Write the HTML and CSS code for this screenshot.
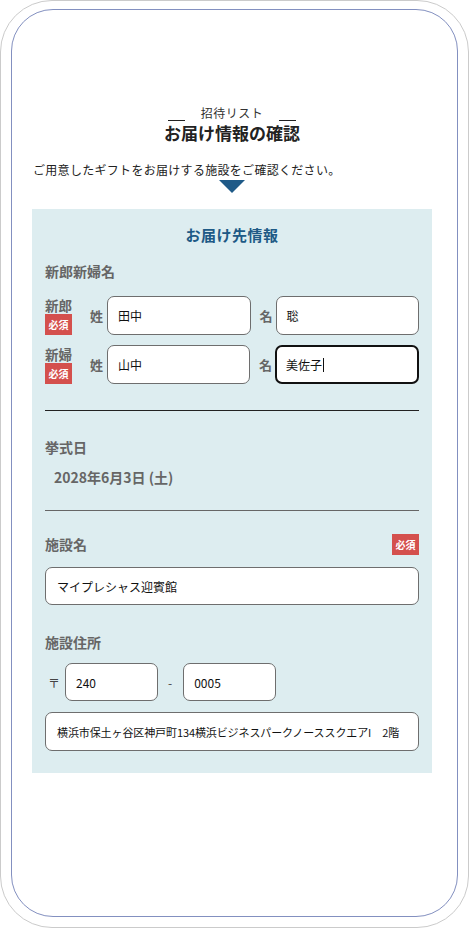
FILE: index.html
```html
<!DOCTYPE html>
<html lang="ja">
<head>
<meta charset="utf-8">
<title>お届け情報の確認</title>
<link rel="stylesheet" href="styles.css">
</head>
<body>
<div class="device">
  <div class="screen">
    <div class="content">
      <div class="eyebrow"><span class="rule"></span><span class="eyebrow-text">招待リスト</span><span class="rule"></span></div>
      <h1 class="title">お届け情報の確認</h1>
      <p class="lead">ご用意したギフトをお届けする施設をご確認ください。</p>
      <div class="arrow"></div>
      <section class="panel">
        <h2 class="panel-title">お届け先情報</h2>
        <div class="label">新郎新婦名</div>
        <div class="names">
          <div class="name-row">
            <div class="who"><span class="who-text">新郎</span><span class="badge">必須</span></div>
            <span class="pair-label first">姓</span>
            <div class="field name-field">田中</div>
            <span class="pair-label">名</span>
            <div class="field name-field">聡</div>
          </div>
          <div class="name-row">
            <div class="who"><span class="who-text">新婦</span><span class="badge">必須</span></div>
            <span class="pair-label first">姓</span>
            <div class="field name-field">山中</div>
            <span class="pair-label">名</span>
            <div class="field name-field focused">美佐子<span class="caret"></span></div>
          </div>
        </div>
        <hr class="divider dark">
        <div class="label date-label">挙式日</div>
        <div class="date">2028年6月3日 (土)</div>
        <hr class="divider grey">
        <div class="label-row">
          <div class="label">施設名</div>
          <span class="badge">必須</span>
        </div>
        <div class="field wide venue">マイプレシャス迎賓館</div>
        <div class="label address-label">施設住所</div>
        <div class="postal">
          <span class="postal-mark">〒</span>
          <div class="field postal-field">240</div>
          <span class="dash">-</span>
          <div class="field postal-field">0005</div>
        </div>
        <div class="field wide address">横浜市保土ヶ谷区神戸町134横浜ビジネスパークノーススクエアI　2階</div>
      </section>
    </div>
  </div>
</div>
</body>
</html>
```
FILE: styles.css
```css
* { box-sizing: border-box; }
html, body { margin: 0; padding: 0; background: #fff; }
body {
  font-family: "Noto Sans CJK JP", "Noto Sans", sans-serif;
  color: #222;
}
.device {
  width: 469px;
  height: 928px;
  border: 1px solid #cbcbcb;
  border-radius: 52px;
  padding: 8px 10px 10px 10px;
}
.screen {
  height: 908px;
  border: 1px solid #8390c0;
  border-radius: 42px;
  overflow: hidden;
}
.content {
  width: 400px;
  margin-left: 20px;
  padding-top: 96px;
  display: flex;
  flex-direction: column;
  align-items: center;
}
.eyebrow {
  display: flex;
  align-items: flex-end;
  gap: 16px;
  height: 15px;
}
.eyebrow-text {
  font-size: 12px;
  line-height: 14px;
  color: #333;
  letter-spacing: 0.5px;
  margin-bottom: 1px;
}
.rule {
  width: 17px;
  height: 1px;
  background: #222;
}
.title {
  margin: 1px 0 0 0;
  font-size: 17px;
  line-height: 22px;
  font-weight: 700;
  color: #222;
}
.lead {
  align-self: flex-start;
  margin: 17px 0 0 1px;
  font-size: 12px;
  line-height: 18px;
  color: #222;
  letter-spacing: 0.3px;
}
.arrow {
  margin-top: 1px;
  width: 0;
  height: 0;
  border-left: 13px solid transparent;
  border-right: 13px solid transparent;
  border-top: 13px solid #1f5a88;
}
.panel {
  align-self: stretch;
  margin-top: 16px;
  background: #ddedf0;
  padding: 16px 13px 22px 13px;
  display: flex;
  flex-direction: column;
}
.panel-title {
  margin: 0;
  text-align: center;
  font-size: 15px;
  line-height: 20px;
  font-weight: 700;
  color: #1e5a86;
  letter-spacing: 0.5px;
}
.label {
  font-size: 14px;
  line-height: 20px;
  font-weight: 700;
  color: #666;
  margin-top: 16px;
}
.names {
  margin-top: 15px;
  display: flex;
  flex-direction: column;
  gap: 10px;
}
.name-row {
  display: flex;
  align-items: center;
  height: 39px;
}
.who {
  width: 27px;
  display: flex;
  flex-direction: column;
  align-items: flex-start;
}
.who-text {
  font-size: 13.5px;
  line-height: 17px;
  font-weight: 700;
  color: #666;
  white-space: nowrap;
}
.badge {
  display: inline-block;
  width: 27px;
  height: 21px;
  background: #d4504d;
  color: #fff;
  font-size: 10px;
  line-height: 21px;
  text-align: center;
  font-weight: 700;
  white-space: nowrap;
}
.pair-label {
  font-size: 13px;
  font-weight: 700;
  color: #666;
  width: 12px;
  margin: 0 4px 0 9px;
}
.pair-label.first {
  margin-left: 18px;
  margin-right: 5px;
}
.field {
  background: #fff;
  border: 1px solid #6e6e6e;
  border-radius: 7px;
  font-size: 12px;
  color: #111;
  display: flex;
  align-items: center;
  padding-left: 10px;
  white-space: nowrap;
}
.name-field {
  flex: 1;
  height: 39px;
}
.field.focused {
  border: 2px solid #111;
  padding-left: 9px;
}
.caret {
  display: inline-block;
  width: 1px;
  height: 14px;
  background: #111;
  margin-left: 1px;
}
.divider {
  margin: 26px 0 0 0;
  border: 0;
  height: 1px;
}
.divider.dark { background: #222; }
.divider.grey { background: #666; margin-top: 23px; }
.date-label { margin-top: 26px; }
.date {
  margin-top: 10px;
  padding-left: 9px;
  font-size: 14px;
  line-height: 20px;
  font-weight: 700;
  color: #666;
}
.label-row {
  margin-top: 22px;
  display: flex;
  justify-content: space-between;
  align-items: center;
  height: 22px;
}
.label-row .label { margin-top: 0; }
.wide {
  width: 100%;
  height: 38px;
  padding-left: 11px;
}
.venue { margin-top: 12px; }
.address-label { margin-top: 27px; }
.postal {
  margin-top: 11px;
  display: flex;
  align-items: center;
  height: 38px;
}
.postal-mark {
  font-size: 12px;
  color: #444;
  margin-left: 3px;
  width: 10px;
}
.postal-field {
  width: 93px;
  height: 38px;
  margin-left: 7px;
}
.dash {
  font-size: 12px;
  color: #444;
  margin-left: 10px;
  margin-right: 11px;
}
.dash + .postal-field { margin-left: 0; }
.address {
  margin-top: 11px;
  height: 39px;
  font-size: 11px;
  letter-spacing: -0.1px;
  overflow: hidden;
}
```
